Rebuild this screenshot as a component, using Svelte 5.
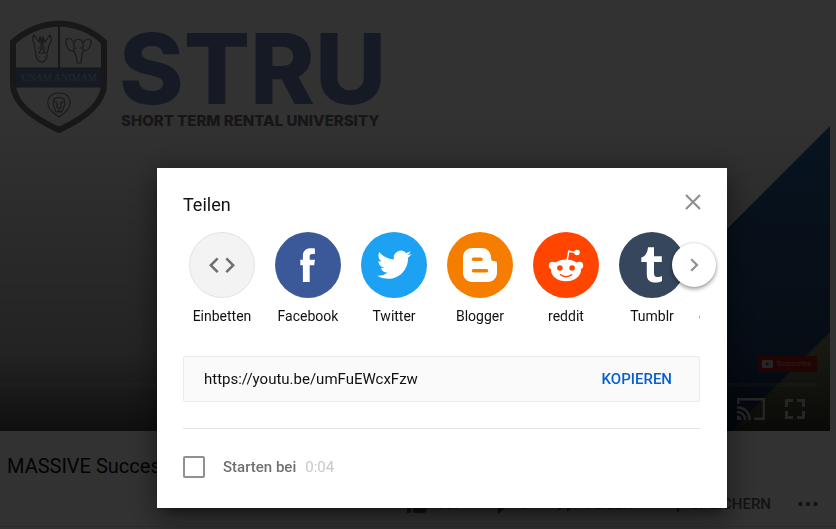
<script>
    const services = [
        {
            name: 'Einbetten',
            id: 'embed',
            path: 'M29.6 39.3l-6-6 6-6-1.8-1.8-7.8 7.8 7.8 7.8zM36.4 39.3l6-6-6-6 1.8-1.8 7.8 7.8-7.8 7.8z'
        },
        {
            name: 'Facebook',
            id: 'facebook',
            path: 'M34.7 50V33.2h4.5l.7-5.5h-5.2v-3.3c0-1.7.7-2.5 2.4-2.5h2.8v-5.4c-.7-.2-2.2-.3-4-.3-4.9 0-8 2.5-8 7.6v3.9h-2.600v5.500h2.600V50z'
        },
        {
            name: 'Twitter',
            id: 'twitter',
            transform: 'translate(16 15.5) scale(1.44)',
            path: 'M23.953 4.57a10 10 0 01-2.825.775 4.958 4.958 0 002.163-2.723c-.951.555-2.005.959-3.127 1.184a4.92 4.92 0 00-8.384 4.482C7.69 8.095 4.067 6.13 1.64 3.162a4.822 4.822 0 00-.666 2.475c0 1.71.87 3.213 2.188 4.096a4.904 4.904 0 01-2.228-.616v.06a4.923 4.923 0 003.946 4.827 4.996 4.996 0 01-2.212.085 4.936 4.936 0 004.604 3.417 9.867 9.867 0 01-6.102 2.105c-.39 0-.779-.023-1.17-.067a13.995 13.995 0 007.557 2.209c9.053 0 13.998-7.496 13.998-13.985 0-.21 0-.42-.015-.63A9.935 9.935 0 0024 4.59z'
        },
        {
            name: 'Blogger',
            id: 'blogger',
            path: 'M25.5 16H34.500C40 16 43.800 19.800 44 25.200C44 27.700 44.500 28.800 46.600 29C49.200 29.100 50 29.600 50 31.400V40.600C50 46.200 46.100 50 40.500 50H25.500C19.900 50 16 46.100 16 40.600V25.400C16 19.900 19.900 16 25.500 16zM26.500 25.500a1.750 1.750 0 0 0 0 3.500h7.500a1.750 1.750 0 0 0 0-3.500zM26.500 37a1.750 1.750 0 0 0 0 3.500h13a1.750 1.750 0 0 0 0-3.500z'
        },
        { name: 'reddit', id: 'reddit' },
        {
            name: 'Tumblr',
            id: 'tumblr',
            path: 'M29 15.300h6v8.900h7.800v5.700H35v10.600c0 3.400 1 4.600 3.600 4.600 1.600 0 3-.5 4.400-1.200v5.200c-1.900 1-4.100 1.500-6.600 1.500-5.700 0-8.600-2.800-8.600-8.100V29.900h-5.500v-4.400c4-1.300 6.200-4.400 6.700-10.200z'
        },
        { name: 'odnoklassniki', id: 'ok' }
    ];

    const link = 'https://youtu.be/umFuEWcxFzw';
    let open = true;
    let startAt = false;
    let list;

    function copyLink() {
        navigator.clipboard.writeText(startAt ? link + '?t=4' : link);
    }

    function next() {
        list.scrollBy({ left: 258, behavior: 'smooth' });
    }
</script>

<main class="page">
    <section class="video">
        <svg class="slide" viewBox="0 0 830 431" preserveAspectRatio="xMinYMin meet">
            <defs>
                <linearGradient id="blue" x1="0" y1="0" x2="0" y2="1">
                    <stop offset="0" stop-color="#2a66ac" />
                    <stop offset="0.45" stop-color="#2d5f92" />
                    <stop offset="1" stop-color="#325a9c" />
                </linearGradient>
            </defs>
            <path d="M830 126v305H525z" fill="url(#blue)" />
            <path d="M830 332v99h-99z" fill="#a6ae80" />

            <g class="crest">
                <path d="M59 23.500C42 24 27 30 13 42v42c0 20 22 35 46 46 24-11 45-26 45-46V42C91 30 76 24 59 23.500z" fill="none" stroke="#77777c" stroke-width="6" />
                <path d="M59 26v43" stroke="#77777c" stroke-width="2" />
                <path d="M16 68h85v19H16z" fill="#6f84b0" stroke="#77777c" />
                <g fill="none" stroke="#808084" stroke-width="1.200">
                    <path d="M35 44c-3-2-3-6-1-9l5 7 1-5 2 5 1-5 2 5 5-7c2 4 1 8-1 10l-2 9c1 3-2 8-5 8s-7-4-6-8l-2-10M41 37v12l-2 4h6l-2-4V37M38 48h2M44 48h2M39 57h1M44 57h1" />
                    <path d="M74 43c2-5 7-5 9 0 3-5 9-5 8 0-1 6-4 8-8 8-1 4-2 8-2 12M74 43c-3-6-9-6-8 0 1 5 3 9 8 8l3 8v4h4M74 43v7M83 43v7M75 48h2M80 48h2" />
                    <path d="M59 93c-7 0-12 4-11 11 0 5 5 9 11 13 6-4 11-8 11-13 1-7-4-11-11-11zM54 99c3-2 7-2 10 0l1 5-3 8h-6l-3-8zM57 102v5l2 2 2-2v-5M54 102h3M61 102h3M57 111h4" />
                </g>
                <text x="59" y="81" text-anchor="middle" class="motto">UNAM ANIMAM</text>
            </g>
            <text x="119" y="104" class="name">STRU</text>
            <text x="121" y="126" class="tagline">SHORT TERM RENTAL UNIVERSITY</text>
        </svg>

        <div class="player">
            <div class="subscribe">
                <svg viewBox="0 0 11 8" width="11" height="8">
                    <rect width="11" height="8" rx="1" fill="#bbb" />
                    <path d="M4 2l3.500 2L4 6z" fill="#a01c1c" />
                </svg>
                Subscribe
            </div>
            <div class="progress"></div>
            <div class="controls">
                <button aria-label="Auf Fernseher wiedergeben">
                    <svg viewBox="0 0 28 22" width="28" height="22" fill="none" stroke="#bbb" stroke-width="2.400">
                        <path d="M1.200 6V1.200h25.600v19.600H17M0 9.500A11.500 11.500 0 0 1 12.500 22M0 14a7.500 7.500 0 0 1 8 8" />
                        <path d="M0 17.500A4 4 0 0 1 4.500 22H0z" fill="#bbb" stroke="none" />
                    </svg>
                </button>
                <button aria-label="Vollbild">
                    <svg viewBox="0 0 20 20" width="20" height="20" fill="none" stroke="#bbb" stroke-width="3">
                        <path d="M1.500 8V1.500H8M12 1.500h6.500V8M18.500 12v6.500H12M8 18.500H1.500V12" />
                    </svg>
                </button>
            </div>
        </div>
    </section>

    <h1><a href="#tag">in</a><span>MASSIVE Success</span></h1>

    <div class="actions">
        <button>
            <svg viewBox="0 0 24 24" width="24" height="24"><path d="M1 21h4V9H1zM23 10c0-1.100-.900-2-2-2h-6.300l1-4.600c0-.800-.300-1.200-1.500-2.400L7.600 7.600C7.200 8 7 8.400 7 9v10c0 1.100.900 2 2 2h9c.800 0 1.500-.500 1.800-1.200l3-7c.100-.300.200-.500.200-.800z" /></svg>
            107
        </button>
        <button>
            <svg viewBox="0 0 24 24" width="24" height="24"><path d="M15 3H6c-.800 0-1.500.500-1.800 1.200l-3 7c-.100.300-.200.500-.200.800v2c0 1.100.900 2 2 2h6.300l-1 4.600.9 1.400 7.200-6.600c.400-.4.600-.9.600-1.400V5c0-1.100-.9-2-2-2zM19 3v12h4V3z" /></svg>
            0
        </button>
        <button>
            <svg viewBox="0 0 24 24" width="24" height="24"><path d="M12 8V4l9 8-9 8v-4c-5 0-8 1-10 4 1-6 4-11 10-12z" /></svg>
            TEILEN
        </button>
        <button>
            <svg viewBox="0 0 24 24" width="24" height="24"><path d="M14 10H2v2h12zM14 6H2v2h12zM18 14v-4h-2v4h-4v2h4v4h2v-4h4v-2zM2 16h8v-2H2z" /></svg>
            SPEICHERN
        </button>
        <button aria-label="Weitere Aktionen">
            <svg viewBox="0 0 20 6" width="20" height="6"><circle cx="2.500" cy="3" r="2.200" /><circle cx="10" cy="3" r="2.200" /><circle cx="17.500" cy="3" r="2.200" /></svg>
        </button>
    </div>
</main>

{#if open}
    <div class="backdrop">
        <div class="dialog" role="dialog" aria-labelledby="share-title">
            <header>
                <h2 id="share-title">Teilen</h2>
                <button class="close" aria-label="Schließen" on:click={() => (open = false)}>
                    <svg viewBox="0 0 16 16" width="16" height="16"><path d="M1 1l14 14M15 1L1 15" fill="none" stroke="#909090" stroke-width="2.200" /></svg>
                </button>
            </header>

            <div class="share">
                <div class="services" bind:this={list}>
                    {#each services as service}
                        <button class="service">
                            <svg class="icon {service.id}" viewBox="0 0 66 66">
                                <circle cx="33" cy="33" r="33" class="disc" />
                                {#if service.id === 'reddit'}
                                    <path d="M34 29l1.800-9.800 7.500 1.500" fill="none" stroke="#fff" stroke-width="1.500" />
                                    <circle cx="44" cy="20.500" r="2.800" />
                                    <circle cx="19.600" cy="33.600" r="3.800" />
                                    <circle cx="46.400" cy="33.600" r="3.800" />
                                    <ellipse cx="33" cy="38.300" rx="15" ry="10.900" />
                                    <circle cx="26.900" cy="36" r="2.800" class="disc" />
                                    <circle cx="39.100" cy="36" r="2.800" class="disc" />
                                    <path d="M27.500 42.800c3 2.600 8 2.600 11 0" class="smile" />
                                {:else}
                                    <path d={service.path} transform={service.transform} fill-rule="evenodd" />
                                {/if}
                            </svg>
                            <span>{service.name}</span>
                        </button>
                    {/each}
                </div>
                <button class="next" aria-label="Weiter" on:click={next}>
                    <svg viewBox="0 0 9 14" width="9" height="14"><path d="M1.200 1.200L7 7l-5.800 5.800" fill="none" stroke="#909090" stroke-width="2.200" /></svg>
                </button>
            </div>

            <div class="link">
                <input type="text" value={link} readonly aria-label="Link">
                <button on:click={copyLink}>KOPIEREN</button>
            </div>

            <div class="start">
                <input type="checkbox" id="start-at" bind:checked={startAt}>
                <label for="start-at">Starten bei</label>
                <span>0:04</span>
            </div>
        </div>
    </div>
{/if}

<style>
    :global(body) {
        margin: 0;
        background: #fafafa;
        font-family: Roboto, "Liberation Sans", sans-serif;
    }
    button {
        padding: 0;
        border: 0;
        background: none;
        font-family: inherit;
        cursor: pointer;
    }
    svg {
        display: block;
    }
    .page {
        height: 100vh;
        overflow: hidden;
    }
    .video {
        display: grid;
        margin-right: 6px;
        aspect-ratio: 830 / 431;
    }
    .slide, .player {
        grid-area: 1 / 1;
        width: 100%;
    }
    .name, .tagline {
        font-family: Inter, "Open Sans", sans-serif;
        font-weight: 800;
    }
    .name {
        font-size: 98px;
        fill: #6c83b8;
    }
    .tagline {
        font-size: 15px;
        fill: #707074;
    }
    .motto {
        font: 10px "Liberation Serif", serif;
        fill: #b4c0e0;
    }
    .player {
        display: flex;
        flex-direction: column;
        justify-content: flex-end;
        align-items: flex-end;
        gap: 11px;
        box-sizing: border-box;
        padding: 0 13px 11px 0;
        background: linear-gradient(transparent 25%, rgba(0, 0, 0, 0.3) 82%, rgba(0, 0, 0, 0.7));
    }
    .subscribe {
        display: flex;
        align-items: center;
        gap: 3px;
        padding: 0 5px 0 4px;
        font: 8px/16px "Liberation Sans", sans-serif;
        color: #e08080;
        background: #a01c1c;
    }
    .progress {
        width: 100%;
        height: 4px;
        background: rgba(255, 255, 255, 0.12);
    }
    .controls {
        display: flex;
        align-items: center;
        gap: 20px;
        padding-right: 12px;
    }
    h1 {
        display: flex;
        margin: 23px 0 0;
        font-size: 20px;
        font-weight: 400;
        line-height: 24px;
        color: #111;
        gap: 6px;
    }
    h1 a {
        display: flex;
        justify-content: flex-end;
        width: 1px;
        overflow: hidden;
        color: #065fd4;
        text-decoration: none;
    }
    .actions {
        display: flex;
        justify-content: flex-end;
        align-items: center;
        gap: 27px;
        margin-top: 14px;
        padding: 0 18px 10px 0;
        border-bottom: 1px solid #e0e0e0;
    }
    .actions button {
        display: flex;
        align-items: center;
        gap: 6px;
        font-size: 15px;
        font-weight: 500;
        line-height: 24px;
        color: #606060;
        fill: #606060;
    }
    .backdrop {
        position: fixed;
        inset: 0;
        display: flex;
        justify-content: center;
        align-items: flex-end;
        padding: 0 0 21px 48px;
        background: rgba(0, 0, 0, 0.8);
    }
    .dialog {
        box-sizing: border-box;
        width: 570px;
        padding: 22px 27px 30px 26px;
        background: #fff;
        box-shadow: 0 16px 24px 2px rgba(0, 0, 0, 0.14), 0 6px 30px 5px rgba(0, 0, 0, 0.3), 0 8px 10px -5px rgba(0, 0, 0, 0.4);
    }
    header {
        display: flex;
        justify-content: space-between;
        align-items: center;
        height: 30px;
    }
    h2 {
        margin: 0;
        font-size: 18px;
        font-weight: 400;
        line-height: 30px;
        color: #111;
    }
    .close {
        align-self: flex-start;
        padding: 4px 0 4px 4px;
        margin-right: -1px;
    }
    .share {
        position: relative;
        margin-top: 12px;
    }
    .services {
        display: flex;
        gap: 8px;
        overflow: hidden;
    }
    .service {
        flex: none;
        display: flex;
        flex-direction: column;
        align-items: center;
        gap: 8px;
        min-width: 78px;
        font-size: 14px;
        line-height: 20px;
        color: #111;
    }
    .icon {
        width: 66px;
        height: 66px;
        fill: #fff;
    }
    .embed {
        fill: #707070;
    }
    .embed .disc {
        fill: #f3f3f3;
        stroke: #e3e3e3;
        r: 32.5px;
    }
    .facebook .disc {
        fill: #3b5998;
    }
    .twitter .disc {
        fill: #1da1f2;
    }
    .blogger .disc {
        fill: #f57d00;
    }
    .reddit .disc {
        fill: #ff4500;
    }
    .smile {
        fill: none;
        stroke: #ff4500;
        stroke-width: 1.5;
        stroke-linecap: round;
    }
    .tumblr .disc {
        fill: #35465d;
    }
    .ok .disc {
        fill: #f7931e;
    }
    .next {
        position: absolute;
        top: 11px;
        right: -16px;
        display: grid;
        place-items: center;
        width: 44px;
        height: 44px;
        border-radius: 50%;
        background: #fff;
        box-shadow: 0 2px 4px rgba(0, 0, 0, 0.4), 0 0 2px rgba(0, 0, 0, 0.15);
    }
    .link {
        display: flex;
        align-items: center;
        margin-top: 30px;
        padding: 0 27px 0 20px;
        border: 1px solid #ebebeb;
        border-radius: 2px;
        background: #fafafa;
    }
    .link input {
        flex: 1;
        min-width: 0;
        height: 44px;
        padding: 0;
        border: 0;
        outline: 0;
        background: none;
        font-family: inherit;
        font-size: 15px;
        color: #111;
    }
    .link button {
        font-size: 15px;
        font-weight: 500;
        color: #065fd4;
    }
    .start {
        display: flex;
        align-items: center;
        margin-top: 26px;
        padding-top: 27px;
        border-top: 1px solid #e3e3e3;
        font-size: 15px;
        line-height: 22px;
        color: #c8c8c8;
    }
    .start input {
        appearance: none;
        width: 22px;
        height: 22px;
        margin: 0;
        border: 2px solid #909090;
        border-radius: 2px;
    }
    .start input:checked {
        background: #065fd4;
    }
    .start label {
        margin: 0 9px 0 18px;
        font-weight: 500;
        color: #707070;
    }
</style>
